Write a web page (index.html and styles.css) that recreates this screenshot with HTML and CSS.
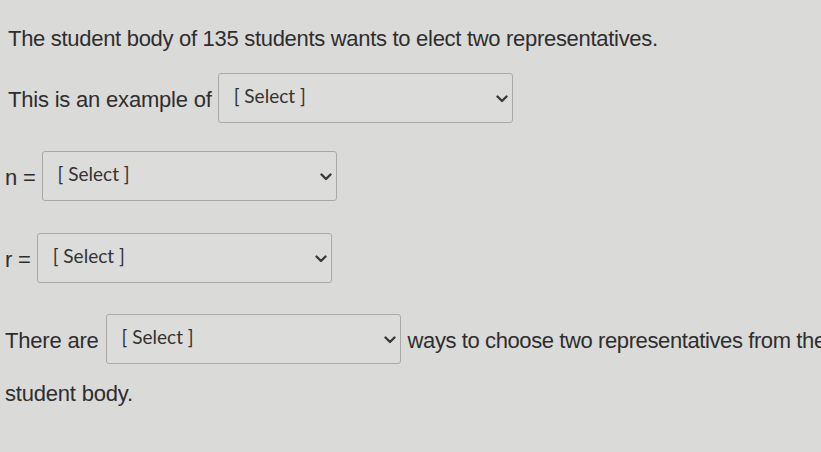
FILE: index.html
```html
<!DOCTYPE html>
<html>
<head>
<meta charset="utf-8">
<link rel="stylesheet" href="styles.css">
</head>
<body>
<div class="quiz">
  <p class="title">The student body of 135 students wants to elect two representatives.</p>
  <div class="row row-example">
    <span class="label">This is an example of</span>
    <div class="select"><span class="sel-text">[ Select ]</span><svg class="chev" viewBox="0 0 12 8" width="12" height="8"><path d="M1.5 1.5 L6 6 L10.5 1.5" fill="none" stroke="#3a3a3a" stroke-width="2.4" stroke-linecap="round" stroke-linejoin="round"/></svg></div>
  </div>
  <div class="row row-n">
    <span class="label">n =</span>
    <div class="select"><span class="sel-text">[ Select ]</span><svg class="chev" viewBox="0 0 12 8" width="12" height="8"><path d="M1.5 1.5 L6 6 L10.5 1.5" fill="none" stroke="#3a3a3a" stroke-width="2.4" stroke-linecap="round" stroke-linejoin="round"/></svg></div>
  </div>
  <div class="row row-r">
    <span class="label">r =</span>
    <div class="select"><span class="sel-text">[ Select ]</span><svg class="chev" viewBox="0 0 12 8" width="12" height="8"><path d="M1.5 1.5 L6 6 L10.5 1.5" fill="none" stroke="#3a3a3a" stroke-width="2.4" stroke-linecap="round" stroke-linejoin="round"/></svg></div>
  </div>
  <div class="row row-there">
    <span class="label">There are</span>
    <div class="select"><span class="sel-text">[ Select ]</span><svg class="chev" viewBox="0 0 12 8" width="12" height="8"><path d="M1.5 1.5 L6 6 L10.5 1.5" fill="none" stroke="#3a3a3a" stroke-width="2.4" stroke-linecap="round" stroke-linejoin="round"/></svg></div>
    <span class="label after">ways to choose two representatives from the</span>
  </div>
  <p class="tail">student body.</p>
</div>
</body>
</html>
```
FILE: styles.css
```css
html, body {
  margin: 0;
  padding: 0;
  background: #dadad8;
  overflow: hidden;
}
.quiz {
  width: 821px;
  height: 452px;
  font-family: "Liberation Sans", Arial, sans-serif;
  color: #2e2e2e;
  font-size: 22px;
  letter-spacing: -0.2px;
  white-space: nowrap;
  overflow: hidden;
}
.title {
  margin: 0;
  padding: 26px 0 0 8px;
  line-height: 26px;
  font-size: 22px;
  letter-spacing: -0.3px;
}
.row {
  display: flex;
  align-items: center;
  height: 50px;
}
.label {
  padding-top: 4px;
  flex: none;
}
.row-example { margin-top: 21px; padding-left: 8px; }
.row-example .select { margin-left: 6px; }
.row-n { margin-top: 28px; padding-left: 5px; }
.row-n .select { margin-left: 6px; }
.row-r { margin-top: 32px; padding-left: 5px; }
.row-r .select { margin-left: 6px; }
.row-there { margin-top: 31px; padding-left: 5px; }
.row-there .select { margin-left: 7px; }
.after { margin-left: 7px; letter-spacing: -0.4px; }
.select {
  box-sizing: border-box;
  width: 295px;
  height: 50px;
  border: 1px solid #a9a9a7;
  border-radius: 3px;
  background: #dcdcda;
  display: flex;
  align-items: center;
  justify-content: space-between;
  padding: 0 4px 0 15px;
  flex: none;
}
.sel-text {
  font-family: Lato, "Liberation Sans", sans-serif;
  font-size: 19px;
  letter-spacing: 0;
  color: #333;
  margin-top: -6px;
}
.chev {
  display: block;
  margin-top: 2px;
}
.tail {
  margin: 17px 0 0 5px;
  line-height: 26px;
}
```
